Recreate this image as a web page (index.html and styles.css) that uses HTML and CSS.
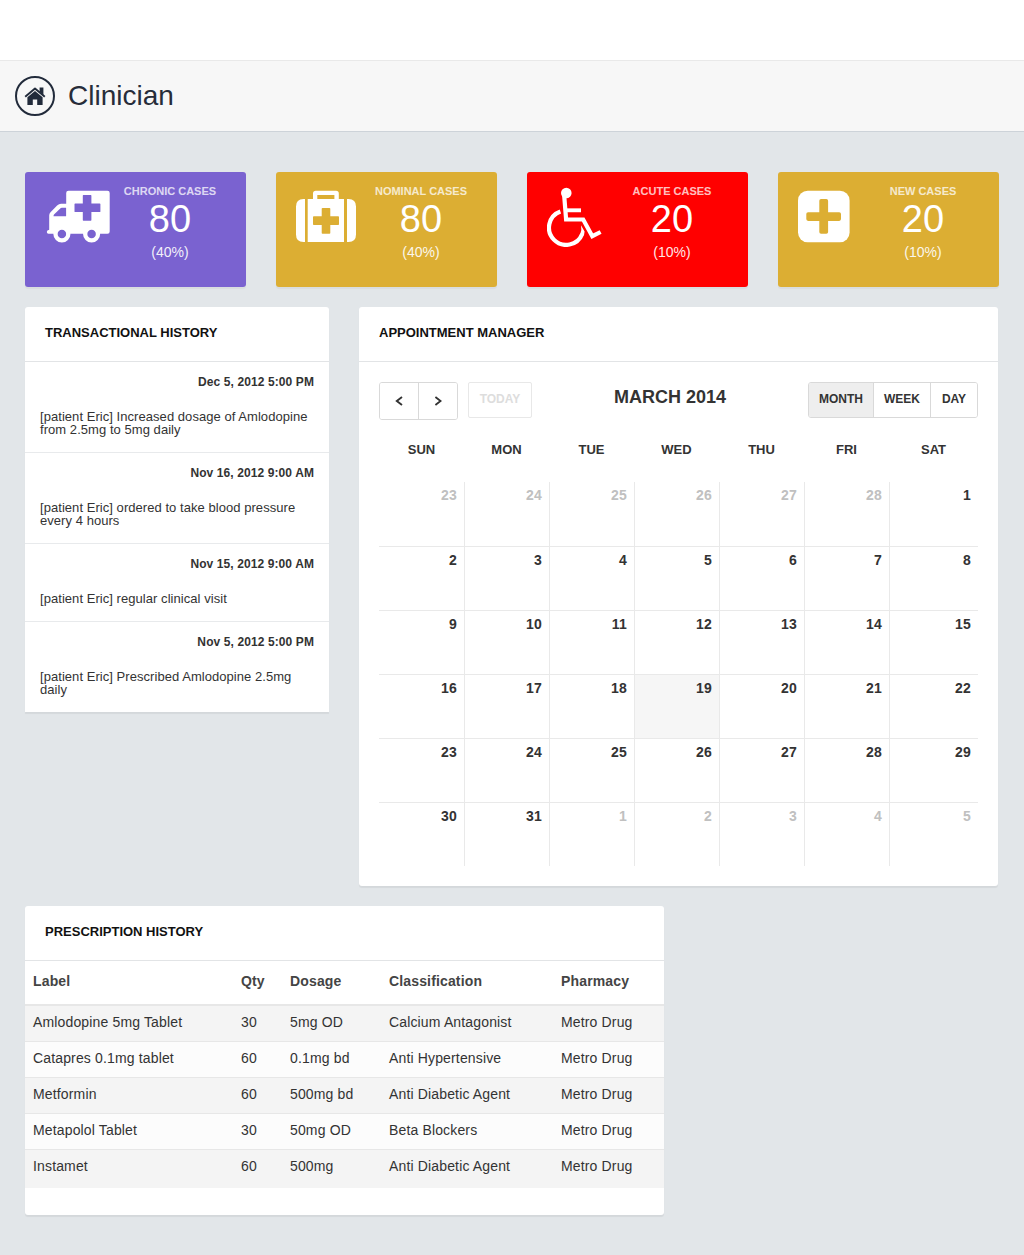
FILE: index.html
```html
<!DOCTYPE html>
<html lang="en">
<head>
<meta charset="utf-8">
<title>Clinician</title>
<link rel="stylesheet" href="styles.css">
</head>
<body>
<div class="topbar"></div>
<header class="page-header">
  <span class="home">
    <svg width="40" height="40" viewBox="0 0 40 40">
      <circle cx="20" cy="20" r="19" fill="none" stroke="#222b3b" stroke-width="2"/>
      <path fill="#222b3b" d="M20 14.9 27.6 21.2V29H22.2V23.4H17.8V29H12.4V21.2ZM24.6 11.6H28.4V19L24.6 15.8Z"/>
      <path fill="none" stroke="#222b3b" stroke-width="1.9" stroke-linejoin="round" d="M10.2 20.7 20 12.5 29.8 20.7"/>
    </svg>
  </span>
  <h1>Clinician</h1>
</header>
<main>
  <section class="stats">
    <div class="stat purple">
      <svg class="stat-icon" viewBox="0 0 70 60"><g transform="translate(1.5 2)">
        <path fill="#fff" fill-rule="evenodd" d="M22 1.7H61Q63.2 1.7 63.2 4V42.6Q63.2 44.8 61 44.8H2Q.3 44.8.3 43Q.3 41 2.7 40.8V26.5Q2.7 24.5 4 23.3L10.6 16.6Q12.5 14.7 14.5 14.7H19.7V4Q19.7 1.7 22 1.7ZM7 27.3H19.6V18.7H15.2Q14.5 18.7 14 19.3L7.5 25.6Q7 26.1 7 27.3ZM36.9 6Q36.3 6 36.3 6.7V14.4H28.7Q28 14.4 28 15V22.4Q28 23 28.7 23H36.3V31Q36.3 31.7 36.9 31.7H44.3Q44.9 31.7 44.9 31V23H53.2Q53.9 23 53.9 22.4V15Q53.9 14.4 53.2 14.4H44.9V6.7Q44.9 6 44.3 6Z"/>
        <g fill="#7a62d0" stroke="#fff" stroke-width="4.3"><circle cx="15.4" cy="44.9" r="6.4"/><circle cx="45.1" cy="44.9" r="6.4"/></g>
      </g></svg>
      <div class="stat-text"><h2>CHRONIC CASES</h2><strong>80</strong><p>(40%)</p></div>
    </div>
    <div class="stat gold">
      <svg class="stat-icon" viewBox="0 0 70 60"><g transform="translate(-1 2)">
        <path fill="#fff" d="M8.5 10H10V53H8.5Q1 53 1 45.5V17.5Q1 10 8.5 10ZM52 10H53.5Q61 10 61 17.5V45.5Q61 53 53.5 53H52Z"/>
        <path fill="#fff" fill-rule="evenodd" d="M12.7 10H18V4.5Q18 1.7 20.8 1.7H41Q43.8 1.7 43.8 4.5V10H49V53H12.7ZM22.3 10H39.4V6H22.3ZM27.5 19Q26.7 19 26.7 19.8V27.3H18.8Q18 27.3 18 28.1V35.2Q18 36 18.8 36H26.7V43.9Q26.7 44.7 27.5 44.7H34.5Q35.3 44.7 35.3 43.9V36H43.2Q44 36 44 35.2V28.1Q44 27.3 43.2 27.3H35.3V19.8Q35.3 19 34.5 19Z"/>
      </g></svg>
      <div class="stat-text"><h2>NOMINAL CASES</h2><strong>80</strong><p>(40%)</p></div>
    </div>
    <div class="stat red">
      <svg class="stat-icon" viewBox="0 0 70 60"><g transform="translate(-1 0)">
        <circle cx="20.3" cy="6" r="5.3" fill="#fff"/>
        <g fill="none" stroke="#fff" stroke-width="4.2">
          <path d="M18.1 7.5 20.1 32.5H37.2L46.3 49.2 54.6 45"/>
          <path d="M19.5 23.3H35" stroke-width="3.9"/>
          <path d="M14.4 24.5A17.2 17.2 0 1 0 36.2 47"/>
        </g>
        <path fill="#fff" d="M34.1 47.4Q36.1 43 35 38.2L38.6 44.5 38 48.2Z"/>
      </g></svg>
      <div class="stat-text"><h2>ACUTE CASES</h2><strong>20</strong><p>(10%)</p></div>
    </div>
    <div class="stat gold">
      <svg class="stat-icon" viewBox="0 0 70 60">
        <rect x="0" y="3.7" width="51.6" height="51.6" rx="9.7" fill="#fff"/>
        <path fill="#dcae33" d="M23.1 12H28.3Q30.1 12 30.1 13.8V25.2H41.2Q43 25.2 43 27V32.1Q43 33.9 41.2 33.9H30.1V45Q30.1 46.8 28.3 46.8H23.1Q21.3 46.8 21.3 45V33.9H10.1Q8.3 33.9 8.3 32.1V27Q8.3 25.2 10.1 25.2H21.3V13.8Q21.3 12 23.1 12Z"/>
      </svg>
      <div class="stat-text"><h2>NEW CASES</h2><strong>20</strong><p>(10%)</p></div>
    </div>
  </section>

  <div class="columns">
    <section class="panel history">
      <h3>TRANSACTIONAL HISTORY</h3>
      <ul>
        <li><time>Dec 5, 2012 5:00 PM</time><p>[patient Eric] Increased dosage of Amlodopine from 2.5mg to 5mg daily</p></li>
        <li><time>Nov 16, 2012 9:00 AM</time><p>[patient Eric] ordered to take blood pressure every 4 hours</p></li>
        <li><time>Nov 15, 2012 9:00 AM</time><p>[patient Eric] regular clinical visit</p></li>
        <li><time>Nov 5, 2012 5:00 PM</time><p>[patient Eric] Prescribed Amlodopine 2.5mg daily</p></li>
      </ul>
    </section>

    <section class="panel appointments">
      <h3>APPOINTMENT MANAGER</h3>
      <div class="calendar">
        <div class="toolbar">
          <div class="group nav">
            <button aria-label="Previous"><svg width="8" height="10" viewBox="0 0 8 10"><path d="M7 1 1.8 5 7 9"/></svg></button>
            <button aria-label="Next"><svg width="8" height="10" viewBox="0 0 8 10"><path d="M1.4 1 6.6 5 1.4 9"/></svg></button>
          </div>
          <button class="today-btn">TODAY</button>
          <h4>MARCH 2014</h4>
          <div class="group views"><button class="active">MONTH</button><button>WEEK</button><button>DAY</button></div>
        </div>
        <div class="weekdays"><span>SUN</span><span>MON</span><span>TUE</span><span>WED</span><span>THU</span><span>FRI</span><span>SAT</span></div>
        <div class="days">
          <span class="out">23</span><span class="out">24</span><span class="out">25</span><span class="out">26</span><span class="out">27</span><span class="out">28</span><span>1</span>
          <span>2</span><span>3</span><span>4</span><span>5</span><span>6</span><span>7</span><span>8</span>
          <span>9</span><span>10</span><span>11</span><span>12</span><span>13</span><span>14</span><span>15</span>
          <span>16</span><span>17</span><span>18</span><span class="today">19</span><span>20</span><span>21</span><span>22</span>
          <span>23</span><span>24</span><span>25</span><span>26</span><span>27</span><span>28</span><span>29</span>
          <span>30</span><span>31</span><span class="out">1</span><span class="out">2</span><span class="out">3</span><span class="out">4</span><span class="out">5</span>
        </div>
      </div>
    </section>
  </div>

  <section class="panel prescriptions">
    <h3>PRESCRIPTION HISTORY</h3>
    <table>
      <colgroup><col class="c-label"><col class="c-qty"><col class="c-dose"><col class="c-class"><col></colgroup>
      <thead><tr><th>Label</th><th>Qty</th><th>Dosage</th><th>Classification</th><th>Pharmacy</th></tr></thead>
      <tbody>
        <tr><td>Amlodopine 5mg Tablet</td><td>30</td><td>5mg OD</td><td>Calcium Antagonist</td><td>Metro Drug</td></tr>
        <tr><td>Catapres 0.1mg tablet</td><td>60</td><td>0.1mg bd</td><td>Anti Hypertensive</td><td>Metro Drug</td></tr>
        <tr><td>Metformin</td><td>60</td><td>500mg bd</td><td>Anti Diabetic Agent</td><td>Metro Drug</td></tr>
        <tr><td>Metapolol Tablet</td><td>30</td><td>50mg OD</td><td>Beta Blockers</td><td>Metro Drug</td></tr>
        <tr><td>Instamet</td><td>60</td><td>500mg</td><td>Anti Diabetic Agent</td><td>Metro Drug</td></tr>
      </tbody>
    </table>
  </section>
</main>
</body>
</html>
```
FILE: styles.css
```css
* { box-sizing: border-box; margin: 0; padding: 0; }
body { background: #e2e6e9; color: #333; font-family: "Liberation Sans", Arial, sans-serif; font-size: 14px; }
ul { list-style: none; }
.topbar { height: 60px; background: #fff; }
.page-header { display: flex; align-items: center; gap: 13px; height: 72px; padding-left: 15px; background: #f7f7f7; border-top: 1px solid #e9e9e9; border-bottom: 1px solid #cdd3d9; }
.home, .home svg { display: block; }
.page-header h1 { font-size: 28px; font-weight: 400; line-height: 40px; color: #272d3a; }
main { padding: 40px 25px; }

.stats { display: grid; grid-template-columns: repeat(4, 221px); column-gap: 30px; margin-bottom: 20px; }
.stat { display: flex; height: 115px; padding: 13px 21px 0 20px; border-radius: 3px; color: #fff; box-shadow: 0 2px 1px rgba(0, 0, 0, .04); }
.purple { background: #7a62d0; }
.gold { background: #dcae33; }
.red { background: #f00; }
.stat-icon { width: 70px; height: 60px; margin-top: 2px; flex: none; }
.stat-text { width: 110px; text-align: center; }
.stat-text h2 { font-size: 11px; line-height: 13px; white-space: nowrap; opacity: .75; }
.stat-text strong { display: block; font-size: 38px; font-weight: 400; line-height: 42px; }
.stat-text p { line-height: 16px; margin-top: 4px; opacity: .9; }

.columns { display: flex; align-items: flex-start; gap: 30px; margin-bottom: 20px; }
.panel { background: #fff; border-radius: 3px; box-shadow: 0 2px 1px rgba(0, 0, 0, .06); }
.panel h3 { height: 55px; padding-left: 20px; border-bottom: 1px solid #e2e4e6; color: #111; font-size: 13px; line-height: 51px; }
.history { width: 304px; border-radius: 3px 3px 0 0; }
.history li { padding: 14px 15px 16px; border-bottom: 1px solid #e8eaec; }
.history li:last-child { border-bottom: 0; }
.history time { display: block; margin-bottom: 22px; text-align: right; font-size: 12px; font-weight: 700; line-height: 12px; letter-spacing: .1px; }
.history p { font-size: 13px; line-height: 13px; letter-spacing: .05px; }

.appointments { width: 639px; height: 579px; }
.calendar { padding: 20px; }
.toolbar { display: grid; grid-template-columns: 79px 64px 1fr 170px; column-gap: 10px; align-items: start; height: 58px; }
.group { display: flex; border: 1px solid #d9d9d9; border-radius: 3px; overflow: hidden; }
button { background: #fff; border: 0; color: #333; font: 700 12px/32px "Liberation Sans", Arial, sans-serif; }
.group button + button { border-left: 1px solid #d9d9d9; }
.nav { height: 38px; }
.nav button { display: flex; align-items: center; justify-content: center; flex: 1; }
.nav svg { fill: none; stroke: #333; stroke-width: 1.9; }
.today-btn { height: 36px; border: 1px solid #e8e8e8; border-radius: 2px; color: #ddd; line-height: 32px; padding-bottom: 2px; }
.toolbar h4 { text-align: center; font-size: 18px; line-height: 30px; }
.views { height: 36px; }
.views button { padding: 0 10px 2px; }
.views button:last-child { flex: 1; }
.views .active { background: #eee; }
.weekdays { display: grid; grid-template-columns: repeat(6, 85px) 89px; height: 42px; text-align: center; font-size: 13px; font-weight: 700; line-height: 20px; }
.days { display: grid; grid-template-columns: 86px repeat(5, 85px) 88px; grid-template-rows: 65px repeat(4, 64px) 63px; text-align: right; font-weight: 700; line-height: 16px; letter-spacing: .2px; }
.days span { padding: 5px 7px 0 0; border-right: 1px solid #e9e9e9; border-bottom: 1px solid #e9e9e9; }
.days span:nth-child(7n) { border-right: 0; }
.days span:nth-last-child(-n+7) { border-bottom: 0; }
.days .out { color: #c0c0c0; }
.days .today { background: #f6f6f6; }

.prescriptions { width: 639px; height: 309px; }
table { width: 100%; table-layout: fixed; border-collapse: separate; border-spacing: 0; }
.c-label { width: 208px; }
.c-qty { width: 49px; }
.c-dose { width: 99px; }
.c-class { width: 172px; }
th, td { padding: 0 8px; text-align: left; white-space: nowrap; letter-spacing: .15px; }
th { height: 43px; padding-bottom: 4px; color: #444; }
td { height: 36px; border-top: 1px solid #e7e7e7; padding-bottom: 3px; }
tbody tr:nth-child(odd) td { background: #f4f4f4; }
tbody tr:nth-child(even) td { background: #fcfcfc; }
tbody tr:first-child td { height: 37px; border-top-width: 2px; }
tbody tr:last-child td { height: 39px; padding-bottom: 6px; }
```
